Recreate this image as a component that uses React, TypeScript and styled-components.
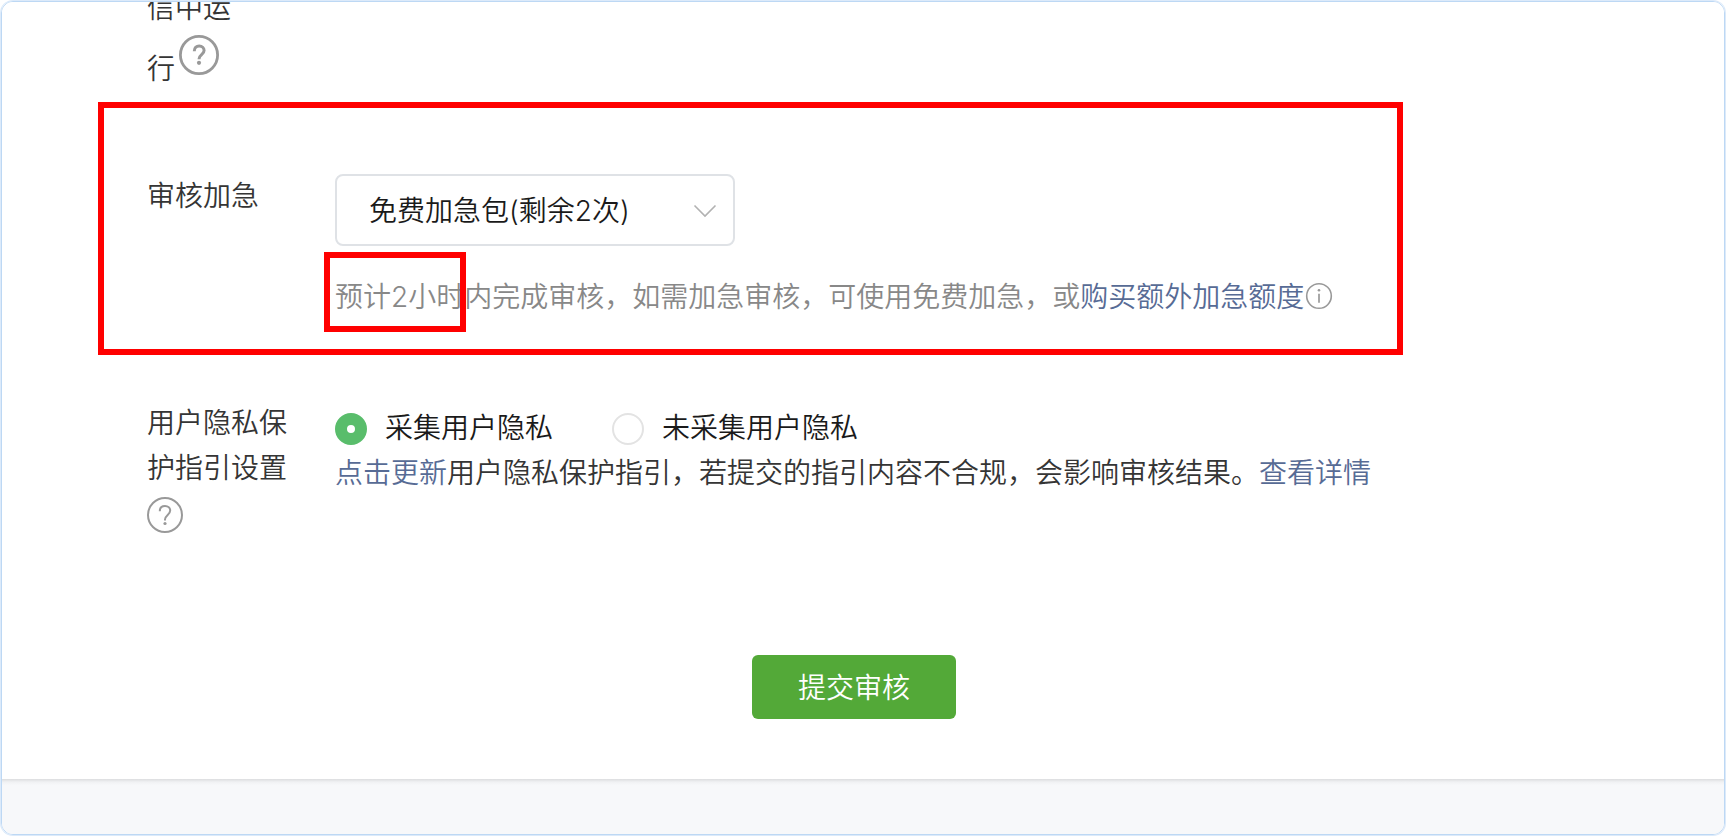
import { useState } from "react";
import styled, { createGlobalStyle } from "styled-components";

const GlobalStyle = createGlobalStyle`
    *{
        box-sizing: border-box;
    }
    body{
        margin: 0;
        background-color: #ffffff;
        font-family: Inter, "Noto Sans CJK SC DemiLight", "Noto Sans CJK SC", sans-serif;
        font-size: 28px;
        font-weight: 350;
        color: #353535;
    }
`;

const Frame = styled.div`
    position: relative;
    display: flex;
    flex-direction: column;
    width: 1724px;
    height: 834px;
    margin: 1px;
    border: 1px solid #bdd8f4;
    border-radius: 12px;
    box-shadow: 0 0 0 1px #dceafa;
    overflow: hidden;
`;

const Panel = styled.main`
    flex: none;
    height: 777px;
    padding-left: 145px;
    background-color: #ffffff;
`;

const Footer = styled.footer`
    flex: 1;
    background: linear-gradient(#dcdddf, #f0f1f3 3px, #f7f8fa 6px);
`;

const Row = styled.section<{ $top: number }>`
    display: grid;
    grid-template-columns: 140px 1fr;
    column-gap: 48px;
    margin-top: ${({ $top }) => $top}px;
`;

const Label = styled.div<{ $line: number; $top?: number }>`
    padding-top: ${({ $top = 0 }) => $top}px;
    line-height: ${({ $line }) => $line}px;
    white-space: nowrap;
    svg{
        display: block;
    }
`;

const LabelLine = styled.div`
    display: flex;
    gap: 4px;
`;

const Field = styled.div<{ $top?: number }>`
    padding-top: ${({ $top = 0 }) => $top}px;
    white-space: nowrap;
`;

const Select = styled.button`
    display: flex;
    align-items: center;
    justify-content: space-between;
    width: 400px;
    height: 72px;
    padding: 0 16px 2px 32px;
    border: 2px solid #dfe2e6;
    border-radius: 8px;
    background-color: #ffffff;
    font: inherit;
    color: #1a1a1a;
    svg{
        margin-top: 4px;
    }
`;

const Hint = styled.p`
    display: flex;
    align-items: center;
    margin: 28px 0 0;
    line-height: 46px;
    color: #888888;
    svg{
        margin-top: -2px;
    }
`;

const Desc = styled.p`
    margin: 0;
    line-height: 45px;
`;

const Link = styled.a`
    color: #576b95;
    cursor: pointer;
`;

const RadioGroup = styled.div`
    display: flex;
    gap: 59px;
`;

const RadioLabel = styled.label`
    display: flex;
    align-items: center;
    gap: 18px;
    line-height: 45px;
    color: #1a1a1a;
    cursor: pointer;
`;

const Radio = styled.input`
    appearance: none;
    width: 32px;
    height: 32px;
    margin: 0;
    border: 2px solid #e3e3e3;
    border-radius: 50%;
    background-color: #ffffff;
    &:checked{
        border: 12px solid #59bd6b;
    }
`;

const Submit = styled.button`
    display: block;
    width: 204px;
    height: 64px;
    margin: 122px 0 0 605px;
    padding: 0 0 2px;
    border: 0;
    border-radius: 6px;
    background-color: #53a938;
    font: inherit;
    color: #ffffff;
`;

// 红框标注，覆盖在表单上方
const Mark = styled.div<{ $x: number; $y: number; $w: number; $h: number }>`
    position: absolute;
    left: ${({ $x }) => $x}px;
    top: ${({ $y }) => $y}px;
    width: ${({ $w }) => $w}px;
    height: ${({ $h }) => $h}px;
    border: 6px solid #ff0000;
    pointer-events: none;
`;

const TopHelpIcon = styled.svg`
    margin-top: -4px;
`;

const HelpIcon = styled.svg`
    margin-top: 6px;
`;

export default function App() {
    const [collect, setCollect] = useState(true);
    return (
        <>
            <GlobalStyle />
            <Frame>
                <Panel>
                    <Row $top={-24}>
                        <Label $line={61}>
                            信中运
                            <LabelLine>
                                行
                                <TopHelpIcon width="40" height="40" viewBox="0 0 40 40" fill="none" stroke="#999999">
                                    <circle cx="20" cy="20" r="18.6" strokeWidth="2.8" />
                                    <path d="M15.3 16.2c0-3.2 2-5.2 4.9-5.2 2.9 0 4.9 1.9 4.9 4.5 0 3.9-5 4.2-5 8.2v.6" strokeWidth="3" />
                                    <circle cx="20" cy="27.8" r="2.1" fill="#999999" stroke="none" />
                                </TopHelpIcon>
                            </LabelLine>
                        </Label>
                    </Row>
                    <Row $top={74}>
                        <Label $line={45}>审核加急</Label>
                        <Field>
                            <Select type="button">
                                免费加急包(剩余2次)
                                <svg width="24" height="14" viewBox="0 0 24 14" fill="none" stroke="#b2b2b2" strokeWidth="1.6">
                                    <path d="M1.5 1.5L12 12 22.5 1.5" />
                                </svg>
                            </Select>
                            <Hint>
                                预计2小时内完成审核，如需加急审核，可使用免费加急，或
                                <Link>购买额外加急额度</Link>
                                <svg width="30" height="28" viewBox="0 0 30 28" fill="none" stroke="#999999">
                                    <circle cx="15" cy="14" r="12.3" strokeWidth="1.6" />
                                    <path d="M15 11.8v9" strokeWidth="1.7" />
                                    <circle cx="15" cy="8.3" r="1.3" fill="#999999" stroke="none" />
                                </svg>
                            </Hint>
                        </Field>
                    </Row>
                    <Row $top={80}>
                        <Label $line={45} $top={1}>
                            用户隐私保
                            <br />
                            护指引设置
                            <HelpIcon width="36" height="36" viewBox="0 0 36 36" fill="none" stroke="#999999">
                                <circle cx="18" cy="18" r="17" strokeWidth="2" />
                                <path d="M12.8 14.2c0-3.4 2.1-5.3 5.2-5.3 3 0 5.2 1.9 5.2 4.7 0 4.2-5.2 4.5-5.2 9v1" strokeWidth="2" />
                                <circle cx="18" cy="26.5" r="1.6" fill="#999999" stroke="none" />
                            </HelpIcon>
                        </Label>
                        <Field $top={6}>
                            <RadioGroup>
                                <RadioLabel>
                                    <Radio type="radio" name="collect" checked={collect} onChange={() => setCollect(true)} />
                                    采集用户隐私
                                </RadioLabel>
                                <RadioLabel>
                                    <Radio type="radio" name="collect" checked={!collect} onChange={() => setCollect(false)} />
                                    未采集用户隐私
                                </RadioLabel>
                            </RadioGroup>
                            <Desc>
                                <Link>点击更新</Link>
                                用户隐私保护指引，若提交的指引内容不合规，会影响审核结果。
                                <Link>查看详情</Link>
                            </Desc>
                        </Field>
                    </Row>
                    <Submit type="button">提交审核</Submit>
                </Panel>
                <Footer />
                <Mark $x={96} $y={100} $w={1305} $h={253} />
                <Mark $x={322} $y={250} $w={142} $h={80} />
            </Frame>
        </>
    );
}
